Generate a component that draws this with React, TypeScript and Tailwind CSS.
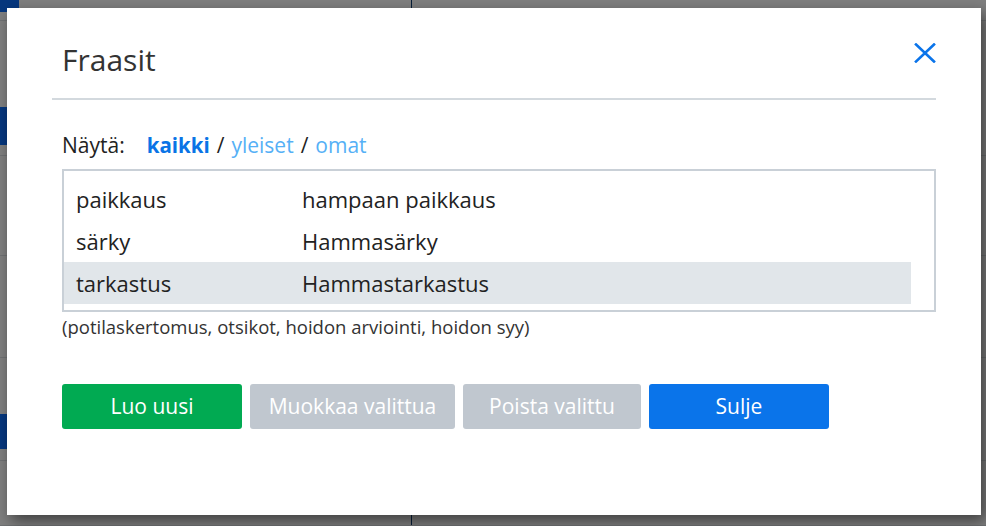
import React from 'react';

const bgRows = [
  { h: 'h-[21px]', pad: 'pt-0', block: 'h-[12px]', glyph: false },
  { h: 'h-[135px]', pad: 'pt-[86px]', block: 'h-[38px]', glyph: true },
  { h: 'h-[100px]', pad: 'pt-0', block: '', glyph: true },
  { h: 'h-[102px]', pad: 'pt-0', block: '', glyph: true },
  { h: 'h-[103px]', pad: 'pt-[56px]', block: 'h-[35px]', glyph: false },
  { h: 'h-[65px]', pad: 'pt-0', block: '', glyph: true },
];

const phrases = [
  { key: 'paikkaus', text: 'hampaan paikkaus', selected: false },
  { key: 'särky', text: 'Hammasärky', selected: false },
  { key: 'tarkastus', text: 'Hammastarkastus', selected: true },
];

export default function App() {
  return (
    <div className="relative w-[986px] h-[526px] overflow-hidden bg-white font-['Open_Sans',sans-serif] text-[#212529]">
      {/* page behind the dialog */}
      <div className="flex flex-col">
        {bgRows.map((r, i) => (
          <div key={i} className={`${r.h} flex border-b border-[#dee2e6]`}>
            <div className={`w-[40px] h-full ${r.pad}`}>
              {r.block && <div className={`w-[19px] ${r.block} bg-[#0d6efd]`} />}
            </div>
            <div className="flex items-center">
              {r.glyph && <span className="text-[20px] text-[#555]">j</span>}
            </div>
            <div className="ml-auto w-[575px] h-full border-l border-[#0d3a70]" />
          </div>
        ))}
      </div>
      <div className="absolute inset-0 bg-black/50" />

      {/* dialog */}
      <div className="absolute left-[7px] top-[8px] w-[974px] h-[507px] bg-white shadow-[4px_6px_14px_rgba(0,0,0,0.5)] flex flex-col">
        <div className="mx-[45px] h-[92px] pt-[37px] border-b-2 border-[#d3d9de] flex justify-between items-start">
          <h5 className="ml-[10px] text-[30px] leading-[30px] text-[#333]">Fraasit</h5>
          <button className="-mt-[2px] text-[#0a74ea]">
            <svg width="22" height="20" viewBox="0 0 22 20" fill="none" stroke="currentColor" strokeWidth="2.6" strokeLinecap="square">
              <path d="M2 1.5 L20 18.5 M20 1.5 L2 18.5" />
            </svg>
          </button>
        </div>

        <div className="px-[45px] flex flex-col">
          <div className="ml-[10px] mt-[31px] h-[28px] leading-[28px] text-[21px] flex items-center text-[#222]">
            <span>Näytä:</span>
            <span className="ml-[22px] font-bold text-[20.5px] text-[#0a74e6]">kaikki</span>
            <span className="mx-[7px]">/</span>
            <span className="text-[#55b0f6]">yleiset</span>
            <span className="mx-[7px]">/</span>
            <span className="text-[#55b0f6]">omat</span>
          </div>

          <div className="ml-[10px] mt-[10px] border-2 border-[#c9d0d7] pt-[7px] pb-[6px] pr-[23px]">
            {phrases.map((p) => (
              <div
                key={p.key}
                className={`h-[42px] leading-[42px] text-[22px] pl-[12px] flex text-[#222] ${p.selected ? 'bg-[#e1e6ea]' : ''}`}
              >
                <span className="w-[226px]">{p.key}</span>
                <span>{p.text}</span>
              </div>
            ))}
          </div>

          <p className="ml-[10px] mt-[3px] text-[18.5px] leading-[24px] text-[#333]">
            (potilaskertomus, otsikot, hoidon arviointi, hoidon syy)
          </p>

          <div className="ml-[10px] mt-[45px] flex gap-[8px]">
            <button className="w-[180px] h-[45px] rounded-[3px] bg-[#01aa52] text-white text-[21px]">Luo uusi</button>
            <button className="w-[205px] h-[45px] rounded-[3px] bg-[#c0c7cf] text-white text-[21px]">Muokkaa valittua</button>
            <button className="w-[178px] h-[45px] rounded-[3px] bg-[#c0c7cf] text-white text-[21px]">Poista valittu</button>
            <button className="w-[180px] h-[45px] rounded-[3px] bg-[#0a74ea] text-white text-[21px]">Sulje</button>
          </div>
        </div>
      </div>
    </div>
  );
}
